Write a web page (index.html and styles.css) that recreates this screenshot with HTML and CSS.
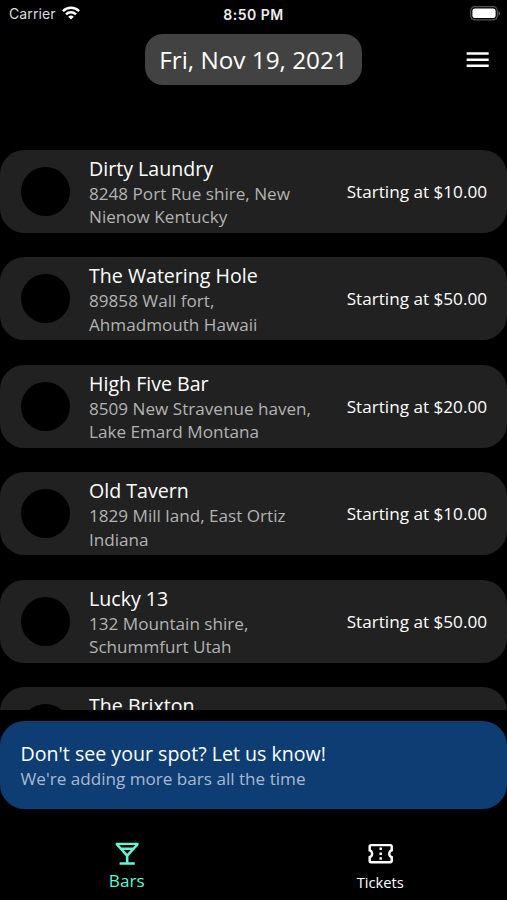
FILE: index.html
```html
<!DOCTYPE html>
<html lang="en">
<head>
<meta charset="utf-8">
<title>Bars</title>
<link rel="stylesheet" href="styles.css">
</head>
<body>
<div class="app">
  <div class="status">
    <div class="carrier"><span>Carrier</span>
      <svg width="18" height="14" viewBox="0 0 18 14" fill="none" stroke="#fff" stroke-width="2.4"><path d="M.9 5.1a11.5 11.5 0 0 1 16.2 0M4 8.3a7.1 7.1 0 0 1 10 0"/><path d="M9 13.6 6.2 10.8a4 4 0 0 1 5.6 0z" fill="#fff" stroke="none"/></svg>
    </div>
    <div class="clock">8:50 PM</div>
    <svg class="battery" width="31" height="15" viewBox="0 0 31 15"><rect x=".7" y=".7" width="26.6" height="13.1" rx="4" fill="none" stroke="#555" stroke-width="1.2"/><rect x="2.4" y="2.4" width="23.2" height="9.7" rx="2.4" fill="#fff"/><path d="M28.6 5v4.8q1.5-.8 1.5-2.4T28.6 5z" fill="#666"/></svg>
  </div>
  <header class="header">
    <div class="date">Fri, Nov 19, 2021</div>
    <svg class="menu" width="29.4" height="29.4" viewBox="0 0 24 24" fill="#fff"><path d="M3 18h18v-2H3v2zm0-5h18v-2H3v2zm0-7v2h18V6H3z"/></svg>
  </header>
  <main class="list">
    <article class="card"><div class="avatar"></div><div class="info"><h2>Dirty Laundry</h2><p>8248 Port Rue shire, New<br>Nienow Kentucky</p></div><div class="price">Starting at $10.00</div></article>
    <article class="card"><div class="avatar"></div><div class="info"><h2>The Watering Hole</h2><p>89858 Wall fort,<br>Ahmadmouth Hawaii</p></div><div class="price">Starting at $50.00</div></article>
    <article class="card"><div class="avatar"></div><div class="info"><h2>High Five Bar</h2><p>8509 New Stravenue haven,<br>Lake Emard Montana</p></div><div class="price">Starting at $20.00</div></article>
    <article class="card"><div class="avatar"></div><div class="info"><h2>Old Tavern</h2><p>1829 Mill land, East Ortiz<br>Indiana</p></div><div class="price">Starting at $10.00</div></article>
    <article class="card"><div class="avatar"></div><div class="info"><h2>Lucky 13</h2><p>132 Mountain shire,<br>Schummfurt Utah</p></div><div class="price">Starting at $50.00</div></article>
    <article class="card"><div class="avatar"></div><div class="info"><h2>The Brixton</h2></div></article>
  </main>
  <section class="banner">
    <h2>Don't see your spot? Let us know!</h2>
    <p>We're adding more bars all the time</p>
  </section>
  <nav class="tabs">
    <div class="tab active">
      <svg width="30.4" height="29.4" viewBox="0 0 24 24" preserveAspectRatio="none" fill="currentColor"><path d="M21 5V3H3v2l8 9v5H6v2h12v-2h-5v-5l8-9zM7.43 7L5.66 5h12.69l-1.78 2H7.43zM9.2 9h5.6L12 12.1z" fill-rule="evenodd"/></svg>
      <span>Bars</span>
    </div>
    <div class="tab">
      <svg width="29.4" height="29.4" viewBox="0 0 24 24" fill="currentColor"><path d="M22 10V6c0-1.11-.9-2-2-2H4c-1.1 0-1.99.89-1.99 2v4c1.1 0 1.99.9 1.99 2s-.89 2-2 2v4c0 1.1.9 2 2 2h16c1.1 0 2-.9 2-2v-4c-1.1 0-2-.9-2-2s.9-2 2-2zm-2-1.46c-1.19.69-2 1.99-2 3.46s.81 2.77 2 3.46V18H4v-2.54c1.19-.69 2-1.99 2-3.46 0-1.48-.8-2.77-1.99-3.46L4 6h16v2.54zM11 15h2v2h-2zm0-4h2v2h-2zm0-4h2v2h-2z"/></svg>
      <span>Tickets</span>
    </div>
  </nav>
</div>
</body>
</html>
```
FILE: styles.css
```css
* { box-sizing: border-box; }
body { margin: 0; background: #000; color: #fff; font-family: "Open Sans", "Noto Sans", sans-serif; }
h2, p { margin: 0; font-weight: 400; white-space: nowrap; }
svg { display: block; flex: none; }
.app { width: 507px; height: 900px; overflow: hidden; display: flex; flex-direction: column; }
.status { height: 28px; flex: none; display: grid; grid-template-columns: 1fr auto 1fr; align-items: center; padding: 0 6px 0 9px; font-family: Inter, "Liberation Sans", sans-serif; font-size: 14px; }
.carrier { display: flex; align-items: center; gap: 6px; color: #ddd; letter-spacing: .1px; }
.carrier span { margin-top: -1px; }
.carrier svg { margin-top: -3px; }
.clock { font-weight: 600; font-size: 14px; letter-spacing: .5px; color: #eee; margin-left: -3px; }
.battery { justify-self: end; margin-top: -2px; }
.header { height: 63px; flex: none; display: grid; grid-template-columns: 1fr auto 1fr; align-items: center; padding: 0 15px; }
.date { grid-column: 2; height: 51px; width: 217px; border-radius: 18px; background: #424242; font-size: 24.3px; line-height: 52px; text-align: center; white-space: nowrap; }
.menu { justify-self: end; }
.list { margin-top: 58.7px; height: 560px; flex: none; overflow: hidden; display: flex; flex-direction: column; gap: 24.5px; }
.card { height: 83px; flex: none; background: #212121; border-radius: 24.5px; display: flex; align-items: center; padding: 0 20px; }
.avatar { width: 49px; height: 49px; border-radius: 50%; background: #000; flex: none; margin: 0 19.5px 0 .5px; }
.info { flex: 1; align-self: flex-start; padding-top: 6px; }
.info h2, .banner h2 { font-size: 19.6px; line-height: 26.7px; }
.info h2 { margin-bottom: -.6px; }
.banner h2 { margin-bottom: -.7px; }
.info p, .banner p { font-size: 17.12px; line-height: 23.3px; color: #b3b3b3; }
.price { font-size: 17.15px; white-space: nowrap; }
.banner { margin-top: 11.8px; height: 88px; flex: none; border-radius: 24.5px; background: #0d3d73; padding: 19.6px 20.5px; }
.banner p { color: #a9bace; }
.tabs { flex: 1; display: grid; grid-template-columns: 1fr 1fr; }
.tab { display: flex; flex-direction: column; align-items: center; padding-top: 29.3px; font-size: 14.7px; line-height: 20px; }
.tab span { margin-top: 3.5px; }
.active { color: #64f5d5; font-size: 17.15px; }
.active span { margin-top: 2.8px; }
```
